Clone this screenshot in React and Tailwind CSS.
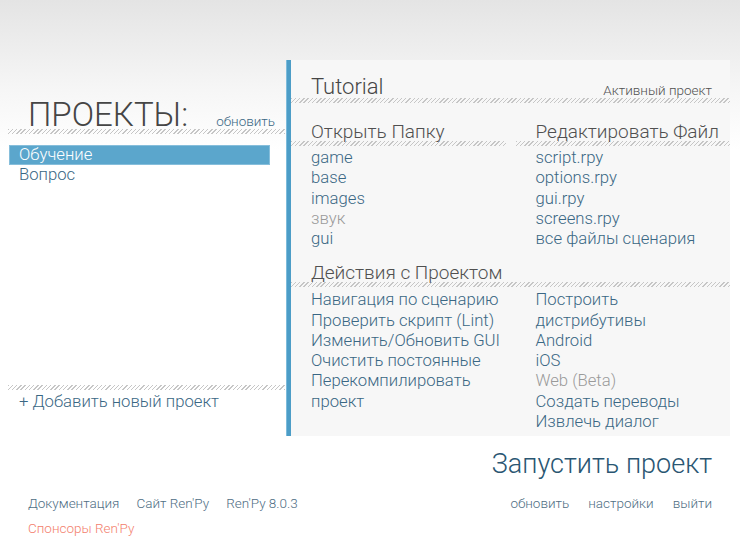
import React from "react";

const hatch =
  "h-[5px] bg-[repeating-linear-gradient(135deg,#c6c6c6_0px,#c6c6c6_1px,transparent_1px,transparent_3px)]";

const folders = [
  { label: "game" },
  { label: "base" },
  { label: "images" },
  { label: "звук", off: true },
  { label: "gui" },
];

const files = ["script.rpy", "options.rpy", "gui.rpy", "screens.rpy", "все файлы сценария"];

const actions = [
  "Навигация по сценарию",
  "Проверить скрипт (Lint)",
  "Изменить/Обновить GUI",
  "Очистить постоянные",
  "Перекомпилировать проект",
];

const builds = [
  { label: "Построить дистрибутивы" },
  { label: "Android" },
  { label: "iOS" },
  { label: "Web (Beta)", off: true },
  { label: "Создать переводы" },
  { label: "Извлечь диалог" },
];

const Link = ({ children, off }) => (
  <div className={`text-[16.7px] leading-[20.25px] font-light ${off ? "text-[#9a9a9a]" : "text-[#3a6784]"}`}>
    {children}
  </div>
);

const Heading = ({ children }) => (
  <div>
    <div className="pl-[20px] text-[19px] leading-[18px] font-light text-[#505050]">{children}</div>
    <div className={hatch} />
  </div>
);

export default function App() {
  return (
    <div className="w-[740px] h-[555px] overflow-hidden flex flex-col bg-[linear-gradient(to_bottom,#e4e4e4_0px,#f6f6f6_90px,#ffffff_150px)] font-['Roboto',sans-serif]">
      <div className="h-[60px] shrink-0" />

      {/* main area */}
      <div className="flex h-[376px] pr-[10px]">
        {/* LEFT: projects */}
        <div className="w-[286px] flex flex-col">
          <div className="pt-[40px] pl-[28px] pr-[11px] flex items-end justify-between">
            <div className="text-[33px] leading-[29px] font-light text-[#454545]">ПРОЕКТЫ:</div>
            <div className="text-[13.5px] leading-[15px] font-light text-[#3a6784]">обновить</div>
          </div>
          <div className={`${hatch} ml-[8px] mr-[1px]`} />

          <div className="mt-[11px] ml-[9px] w-[261px]">
            <div className="h-[20px] leading-[18px] pl-[9px] text-[16.7px] font-light text-white bg-[#5ba6cc] border border-[#86bedb]">
              Обучение
            </div>
            <div className="h-[20px] leading-[20px] pl-[10px] text-[16.7px] font-light text-[#3a6784]">Вопрос</div>
          </div>

          <div className="flex-1" />
          <div className={`${hatch} ml-[8px] mr-[1px]`} />
          <div className="mt-[2px] pl-[19px] text-[16.7px] leading-[20px] font-light text-[#3a6784] pb-[24px]">
            + Добавить новый проект
          </div>
        </div>

        {/* divider */}
        <div className="w-[5px] bg-[#4c9dc7] border-l border-[#7dbbdb]" />

        {/* RIGHT: project panel */}
        <div className="flex-1 bg-[#f7f7f7] flex flex-col pt-[14px]">
          <div className="flex items-end justify-between pl-[20px] pr-[18px]">
            <div className="text-[22px] leading-[22px] pt-[2px] font-light text-[#454545]">Tutorial</div>
            <div className="text-[13.5px] leading-[15px] font-light text-[#505050]">Активный проект</div>
          </div>
          <div className={hatch} />

          <div className="grid grid-cols-2 gap-x-[10px] mt-[20px]">
            <div>
              <Heading>Открыть Папку</Heading>
              <div className="pl-[20px] pt-[2px]">
                {folders.map((f) => (
                  <Link key={f.label} off={f.off}>{f.label}</Link>
                ))}
              </div>
            </div>
            <div>
              <Heading>Редактировать Файл</Heading>
              <div className="pl-[20px] pt-[2px]">
                {files.map((f) => (
                  <Link key={f}>{f}</Link>
                ))}
              </div>
            </div>
          </div>

          <div className="mt-[15px]">
            <div className="pl-[20px] text-[19px] leading-[18px] font-light text-[#505050]">Действия с Проектом</div>
            <div className={hatch} />
          </div>

          <div className="grid grid-cols-2 gap-x-[10px] mt-[3px]">
            <div className="pl-[20px] pr-[4px]">
              {actions.map((a) => (
                <Link key={a}>{a}</Link>
              ))}
            </div>
            <div className="pl-[20px] pr-[18px]">
              {builds.map((b) => (
                <Link key={b.label} off={b.off}>{b.label}</Link>
              ))}
            </div>
          </div>
        </div>
      </div>

      {/* bottom */}
      <div className="flex justify-end pr-[28px] pt-[13px]">
        <div className="text-[27px] leading-[30px] font-light text-[#2a5672]">Запустить проект</div>
      </div>

      <div className="flex justify-between px-[28px] mt-[14px] text-[13.5px] leading-[20px] font-light text-[#4f6e84]">
        <div className="flex gap-[17px]">
          <span>Документация</span>
          <span>Сайт Ren'Py</span>
          <span>Ren'Py 8.0.3</span>
        </div>
        <div className="flex gap-[19px]">
          <span>обновить</span>
          <span>настройки</span>
          <span>выйти</span>
        </div>
      </div>
      <div className="px-[28px] mt-[5px] text-[13.5px] leading-[20px] font-light text-[#f3806d]">Спонсоры Ren'Py</div>
    </div>
  );
}
